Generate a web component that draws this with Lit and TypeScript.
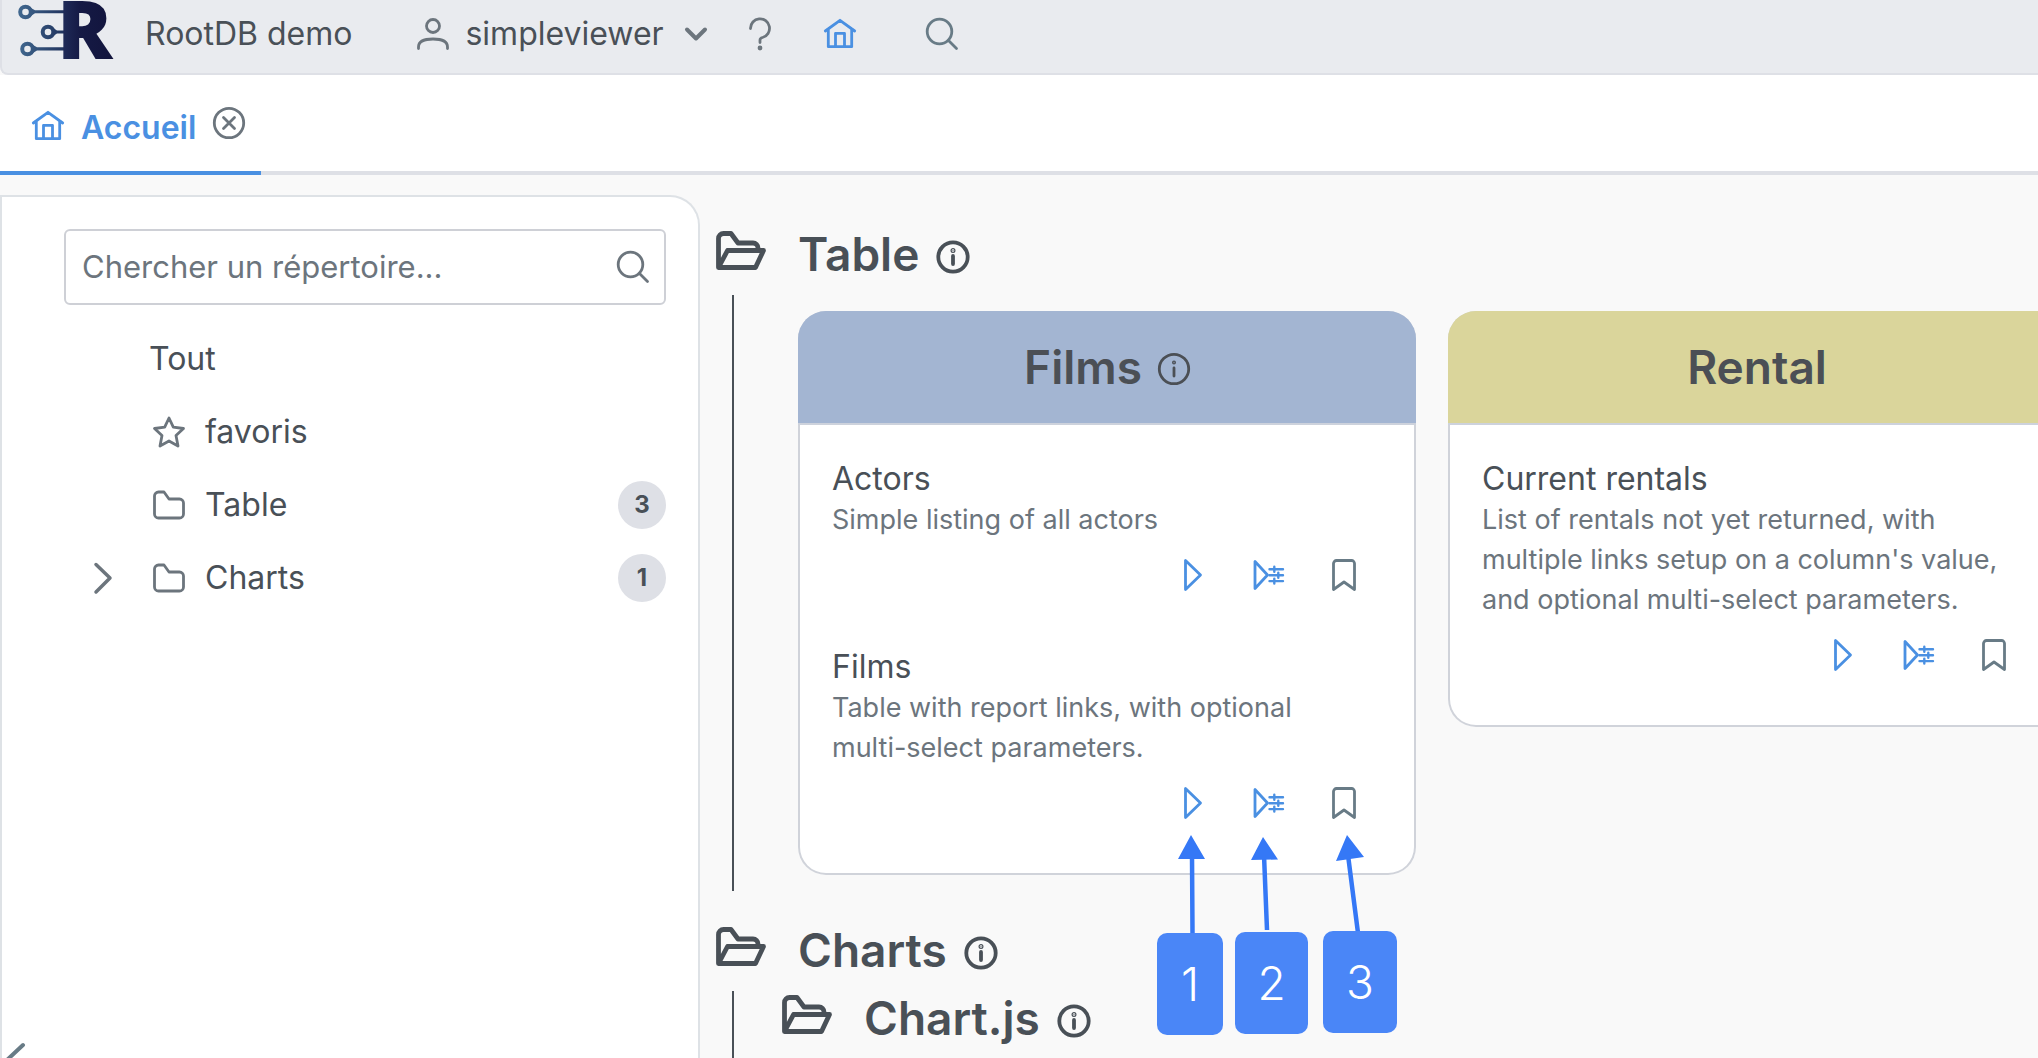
import { LitElement, html, css, svg, nothing, type TemplateResult } from "lit";
import { customElement, property } from "lit/decorators.js";

/* Icon drawings on a 32 x 32 grid, stroked with the current colour. */
const ICONS: Record<string, TemplateResult> = {
  user: svg`<circle cx="16" cy="8" r="6.5"/><path d="M1.500 30.500v-1.500c0-6 6-8 14.500-8s14.500 2 14.500 8v1.500"/>`,
  chevronDown: svg`<path d="M7 11.500l9 9 9-9" stroke-width="4"/>`,
  chevronRight: svg`<path d="M9 2.500L23 16 9 30" stroke-width="3.500"/>`,
  chevronLeft: svg`<path d="M24 1L8 16l16 15" stroke-width="4"/>`,
  question: svg`<path d="M6.500 10.500a9.500 9.500 0 1 1 12 9c-2 .5-2.500 1-2.500 2.500v2.500"/><circle cx="16" cy="30" r="1" fill="currentColor"/>`,
  home: svg`<path d="M1.300 13L16 2.300 30.700 13M4.300 11v17.700h23.400V11M11.500 28.500V15.300h9v13.200"/>`,
  search: svg`<circle cx="13.500" cy="13.500" r="12.300"/><path d="M22.500 22.500l8 8"/>`,
  close: svg`<circle cx="16" cy="16" r="14.700"/><path d="M10.500 10.500l11 11M21.500 10.500l-11 11"/>`,
  star: svg`<path d="M16 2l4.300 9.200 10.200 1.300-7.500 7 2 10.500-9-5-9 5 2-10.500-7.500-7 10.200-1.300z"/>`,
  folder: svg`<path d="M1.500 25V7A4 4 0 0 1 5.500 3H11L16 10h10.500a4 4 0 0 1 4 4V25a4 4 0 0 1-4 4H5.500A4 4 0 0 1 1.500 25z"/>`,
  info: svg`<circle cx="16" cy="16" r="14.700"/><path d="M16 15v8"/><circle cx="16" cy="9.500" r=".6" fill="currentColor"/>`,
  play: svg`<path d="M9.500 1.500v29L24.500 16z"/>`,
  params: svg`<path d="M3 2.500v27L15.500 16z"/><path stroke-width="2.400" d="M17.500 10.300H31M17.500 16.200H31M17.500 22.100H31M22.300 7.800v5M26.300 13.700v5M22.300 19.600v5"/>`,
  bookmark: svg`<path d="M5.500 30.500V4.500a3 3 0 0 1 3-3h15a3 3 0 0 1 3 3v26L16 23z"/>`,
};

@customElement("ui-icon")
export class UiIcon extends LitElement {
  @property() name = "";
  @property({ type: Number }) weight = 2.8;

  static styles = css`
    :host { display: inline-flex; flex: none; width: 32px; height: 32px; }
    svg { width: 100%; height: 100%; overflow: visible; }
  `;

  render() {
    return html`<svg viewBox="0 0 32 32" fill="none" stroke="currentColor" stroke-width=${this.weight}
      stroke-linecap="round" stroke-linejoin="round" aria-hidden="true">${ICONS[this.name] ?? nothing}</svg>`;
  }
}

interface Report { name: string; description: string; }
interface Group { name: string; tone: string; info: boolean; reports: Report[]; }

const GROUPS: Group[] = [
  {
    name: "Films", tone: "blue", info: true,
    reports: [
      { name: "Actors", description: "Simple listing of all actors" },
      { name: "Films", description: "Table with report links, with optional multi-select parameters." },
    ],
  },
  {
    name: "Rental", tone: "sand", info: false,
    reports: [
      { name: "Current rentals", description: "List of rentals not yet returned, with multiple links setup on a column's value, and optional multi-select parameters." },
    ],
  },
];

@customElement("report-card")
export class ReportCard extends LitElement {
  @property({ attribute: false }) group!: Group;

  static styles = css`
    :host { display: block; flex: none; width: 618px; }
    .card { box-sizing: border-box; border-radius: 28px; overflow: hidden; background: #fff; box-shadow: inset 0 0 0 2px #d0d3da; }
    .head { display: flex; align-items: center; justify-content: center; gap: 16px; height: 112px; color: #4b4f55; border-bottom: 2px solid #cdd2dc; }
    .head ui-icon { margin-top: 4px; }
    .blue { background: #a3b5d2; }
    .sand { background: #dad59b; }
    h3 { margin: 0; font-size: 46px; line-height: 54px; font-weight: 600; }
    .body { padding: 32px 34px 2px; }
    .report { padding-bottom: 35px; }
    h4 { margin: 0; font-size: 32px; line-height: 43px; font-weight: 400; color: #495057; }
    p { margin: 0; padding-right: 24px; font-size: 27px; line-height: 40px; color: #6c757d; }
    .actions { display: flex; justify-content: flex-end; }
    button { display: flex; align-items: center; justify-content: center; width: 76px; height: 70px; padding: 0; border: 0; background: none; color: #4a90e2; }
    .mark { color: #687b86; }
  `;

  render() {
    const g = this.group;
    return html`<article class="card">
      <header class="head ${g.tone}">
        <h3>${g.name}</h3>
        ${g.info ? html`<ui-icon name="info"></ui-icon>` : nothing}
      </header>
      <div class="body">
        ${g.reports.map((r) => html`<section class="report">
          <h4>${r.name}</h4>
          <p>${r.description}</p>
          <div class="actions">
            <button aria-label="Run"><ui-icon name="play"></ui-icon></button>
            <button aria-label="Run with parameters"><ui-icon name="params"></ui-icon></button>
            <button class="mark" aria-label="Bookmark"><ui-icon name="bookmark"></ui-icon></button>
          </div>
        </section>`)}
      </div>
    </article>`;
  }
}

@customElement("app-root")
export class AppRoot extends LitElement {
  static styles = css`
    :host { display: flex; flex-direction: column; height: 100vh; overflow: hidden; background: #f9f9f9; color: #495057; font-family: Inter, "Liberation Sans", sans-serif; font-size: 32px; line-height: 40px; }
    button { font: inherit; color: inherit; border: 0; padding: 0; background: none; display: flex; align-items: center; }
    a { color: inherit; text-decoration: none; display: flex; align-items: center; }

    .top { flex: none; display: flex; align-items: center; box-sizing: border-box; height: 75px; padding: 0 16px 6px; border: 2px solid #dee0e6; border-top: 0; border-right: 0; border-bottom-left-radius: 8px; background: #e9ebef; }
    .logo { display: block; flex: none; width: 98px; height: 68px; overflow: visible; }
    .brand { margin-left: 29px; }
    .user { margin-left: 65px; gap: 16px; }
    .muted { color: #6c757d; }
    .help { margin-left: 32px; }
    .home { margin-left: 48px; color: #4a90e2; }
    .find { margin-left: 70px; color: #687b86; }

    .tabs { flex: none; display: flex; box-sizing: border-box; height: 100px; background: #fff; box-shadow: inset 0 -4px #dee0e6; }
    .tab { box-sizing: border-box; width: 261px; padding: 6px 0 0 32px; gap: 17px; display: flex; align-items: center; border-bottom: 4px solid #4a90e2; color: #4a90e2; font-weight: 600; }
    .tab a { padding-top: 4px; }
    .tab .muted { margin-bottom: 6px; }

    .work { flex: 1; min-height: 0; display: flex; padding-top: 20px; }
    .side { position: relative; flex: none; box-sizing: border-box; width: 700px; padding: 32px 32px 0 62px; border: 2px solid #dee2e6; border-bottom: 0; border-top-right-radius: 30px; background: #fff; }
    .search { display: flex; align-items: center; box-sizing: border-box; height: 76px; padding: 0 15px 0 16px; border: 2px solid #ced0d6; border-radius: 6px; }
    input { flex: 1; min-width: 0; padding: 0; border: 0; outline: 0; background: none; font: inherit; font-size: 31px; color: #495057; }
    input::placeholder { color: #6c757d; opacity: 1; }
    ul { list-style: none; margin: 0; padding: 17px 0 0; }
    .dir { display: flex; align-items: center; height: 73px; gap: 20px; }
    .dir > ui-icon { margin-left: 4px; }
    .twist { box-sizing: border-box; width: 65px; padding-left: 12px; display: flex; justify-content: center; }
    .label { flex: 1; }
    .count { width: 48px; line-height: 48px; border-radius: 50%; background: #dee0e6; text-align: center; font-size: 24px; font-weight: 700; }
    .fold { position: absolute; left: -3px; bottom: -18px; color: #687b86; }

    .main { flex: 1; min-width: 0; overflow: hidden; padding: 32px 0 0 16px; display: flex; flex-direction: column; gap: 32px; }
    .heading { display: flex; align-items: center; height: 54px; }
    .heading svg { margin-bottom: 6px; }
    .heading ui-icon { margin-top: 6px; }
    .heading h2 { margin: 0 18px 0 32px; font-size: 46px; line-height: 54px; font-weight: 600; }
    .content { margin: 14px 0 0 16px; border-left: 2px solid #495057; padding-left: 48px; }
    .cards { position: relative; display: flex; align-items: flex-start; gap: 32px; padding: 16px; }
    .charts { flex: 1; display: flex; flex-direction: column; }
    .charts .content { flex: 1; }

    .notes { position: absolute; left: 0; top: 0; }
    .arrows { position: absolute; left: 380px; top: 540px; width: 220px; height: 100px; overflow: visible; }
    .note { position: absolute; display: flex; align-items: center; justify-content: center; height: 102px; border-radius: 10px; background: #4a86f7; color: #fff; font-size: 46px; font-weight: 300; }
    .n1 { left: 375px; top: 638px; width: 66px; }
    .n2 { left: 453px; top: 637px; width: 73px; }
    .n3 { left: 541px; top: 636px; width: 74px; }
  `;

  private heading(text: string) {
    return html`<div class="heading">
      <svg width="50" height="40" viewBox="0 0 50 40" fill="none" stroke="currentColor" stroke-width="4.800" stroke-linejoin="round" aria-hidden="true">
        <path d="M2.500 36V7.500a5 5 0 0 1 5-5h7.500l7 9.500H37a5 5 0 0 1 5 5v2.500M2.500 36.500L11.500 19.500H47.500L39.500 36.500z"/>
      </svg>
      <h2>${text}</h2>
      <ui-icon name="info" .weight=${3.8}></ui-icon>
    </div>`;
  }

  private dir(label: string, icon = "", count = 0, twist = false) {
    return html`<li class="dir">
      <span class="twist muted">${twist ? html`<ui-icon name="chevronRight"></ui-icon>` : nothing}</span>
      ${icon ? html`<ui-icon class="muted" name=${icon}></ui-icon>` : nothing}
      <span class="label">${label}</span>
      ${count ? html`<span class="count">${count}</span>` : nothing}
    </li>`;
  }

  render() {
    return html`
      <header class="top">
        <svg class="logo" viewBox="0 0 98 68" role="img" aria-label="RootDB">
          <defs>
            <linearGradient id="wire" gradientUnits="userSpaceOnUse" x1="0" y1="0" x2="50" y2="0"><stop stop-color="#41688f"/><stop offset="1" stop-color="#1e2f5a"/></linearGradient>
            <linearGradient id="letter"><stop stop-color="#23315f"/><stop offset=".4" stop-color="#151a45"/><stop offset="1" stop-color="#12143c"/></linearGradient>
          </defs>
          <g fill="none" stroke="url(#wire)" stroke-width="4">
            <circle cx="7.500" cy="12" r="5.300"/><circle cx="30" cy="32" r="5.300"/><circle cx="9.500" cy="49" r="5.300"/>
          </g>
          <path fill="url(#wire)" d="M12 7.500L17 10.300H48V13.300H17L12 16.500zM34.500 27.500L39 30.500H48V33.500H39L34.500 36.500zM14 44.500L19 47.300H48V50.500H19L14 53.500z"/>
          <text x="39" y="59" fill="url(#letter)" font-family="Open Sans" font-weight="800" font-size="82">R</text>
        </svg>
        <span class="brand">RootDB demo</span>
        <button class="user"><ui-icon class="muted" name="user"></ui-icon>simpleviewer<ui-icon class="muted" name="chevronDown"></ui-icon></button>
        <button class="help muted" aria-label="Aide"><ui-icon name="question"></ui-icon></button>
        <a class="home" href="#" aria-label="Accueil"><ui-icon name="home"></ui-icon></a>
        <button class="find" aria-label="Chercher"><ui-icon name="search"></ui-icon></button>
      </header>
      <nav class="tabs">
        <div class="tab">
          <ui-icon name="home"></ui-icon><a href="#">Accueil</a>
          <button class="muted" aria-label="Fermer"><ui-icon name="close"></ui-icon></button>
        </div>
      </nav>
      <div class="work">
        <aside class="side">
          <label class="search">
            <input type="text" placeholder="Chercher un répertoire..." aria-label="Chercher un répertoire" />
            <ui-icon class="muted" name="search"></ui-icon>
          </label>
          <ul>
            ${this.dir("Tout")}${this.dir("favoris", "star")}${this.dir("Table", "folder", 3)}${this.dir("Charts", "folder", 1, true)}
          </ul>
          <button class="fold" aria-label="Replier"><ui-icon name="chevronLeft"></ui-icon></button>
        </aside>
        <main class="main">
          <section>
            ${this.heading("Table")}
            <div class="content">
              <div class="cards">
                ${GROUPS.map((g) => html`<report-card .group=${g}></report-card>`)}
                <div class="notes">
                  <svg class="arrows" viewBox="0 0 220 100" fill="#3578f6" stroke="#3578f6" aria-hidden="true">
                    <path d="M30 20L30.500 98M102 20L105 95M186 20L196 98" stroke-width="4.500"/>
                    <path stroke="none" d="M29 0L43 24H16zM101 2L116 24.500 89 25zM185 0L202 22 174 26z"/>
                  </svg>
                  <span class="note n1">1</span><span class="note n2">2</span><span class="note n3">3</span>
                </div>
              </div>
            </div>
          </section>
          <section class="charts">
            ${this.heading("Charts")}
            <div class="content">${this.heading("Chart.js")}</div>
          </section>
        </main>
      </div>
    `;
  }
}
